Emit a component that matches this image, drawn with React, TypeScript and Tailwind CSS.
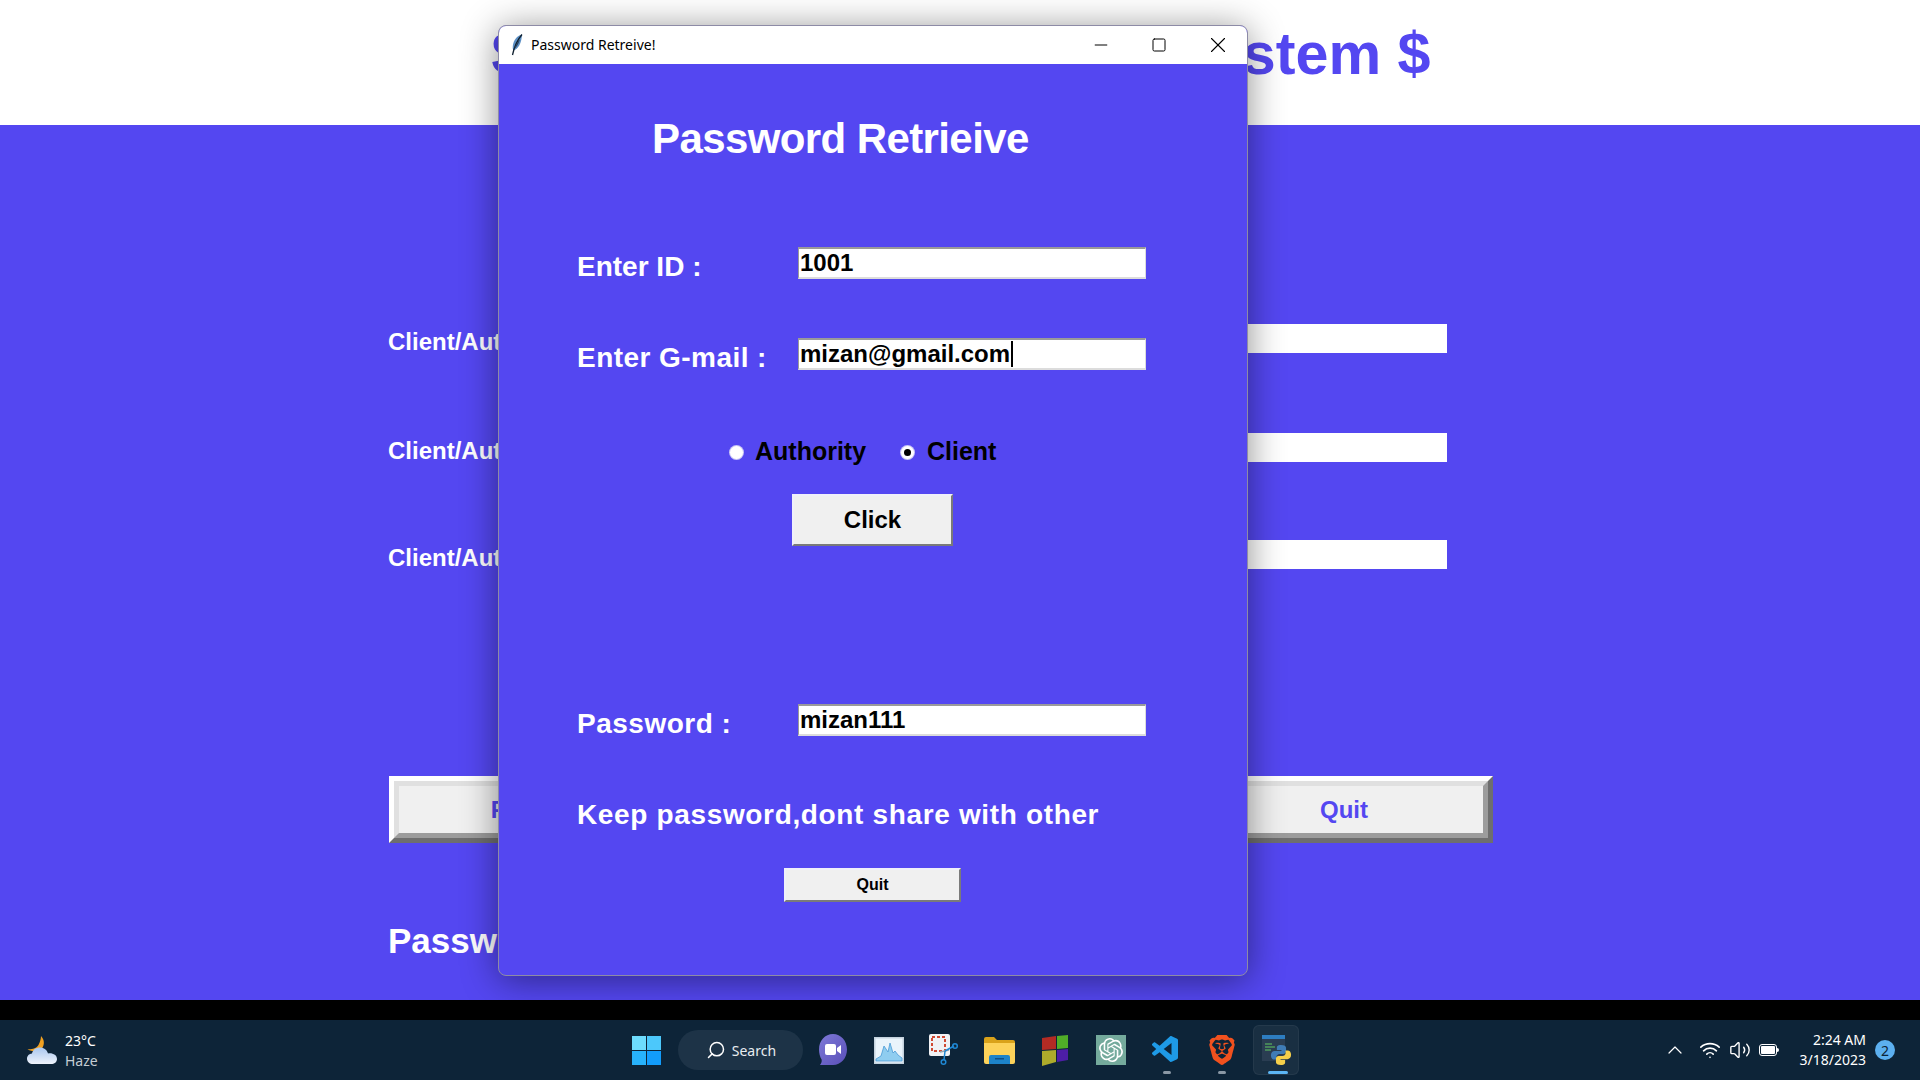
import React from "react";
import { ChevronUp, Wifi, Volume2, Search, Minus, X, Square } from "lucide-react";
import { SiOpenai, SiBrave } from "react-icons/si";
import { VscVscode } from "react-icons/vsc";

const raised =
  "border-2 border-t-[#f0f0fa] border-l-[#f0f0fa] border-r-[#7a7a7a] border-b-[#7a7a7a] bg-[#f0f0f0] flex items-center justify-center text-black font-bold";

function Entry({ text, cursor }: { text: string; cursor?: boolean }) {
  return (
    <div className="w-[348px] h-8 bg-white border-t-2 border-t-[#9a9a9a] border-l border-l-[#9a9a9a] border-r border-r-[#dcdcdc] border-b-2 border-b-[#dcdcdc] flex items-center pl-px text-black font-bold text-2xl">
      <span>{text}</span>
      {cursor && <span className="w-0.5 h-[26px] bg-black ml-px" />}
    </div>
  );
}

function WinRow({ label, text, cursor, track, mt }: { label: string; text: string; cursor?: boolean; track: string; mt: string }) {
  return (
    <div className={`flex items-start h-8 pl-[78px] ${mt}`}>
      <div className={`w-[221px] h-8 pt-[4px] text-white font-bold text-[28px] leading-8 whitespace-nowrap ${track}`}>{label}</div>
      <Entry text={text} cursor={cursor} />
    </div>
  );
}

function BgRow({ mt }: { mt: string }) {
  return (
    <div className={`w-[1059px] h-[29px] flex items-center justify-between ${mt}`}>
      <div className="pt-1.5 text-white font-bold text-2xl leading-7 whitespace-nowrap">Client/Authority ID :</div>
      <div className="w-[647px] h-[29px] bg-white" />
    </div>
  );
}

function BgButton({ label }: { label: string }) {
  return (
    <div className="w-[298px] h-[67px] border-[5px] border-t-white border-l-white border-r-[#6e6e6e] border-b-[#6e6e6e]">
      <div className="w-full h-full border-[5px] border-t-[#e0e0e0] border-l-[#e0e0e0] border-r-[#9c9c9c] border-b-[#9c9c9c] bg-[#f0f0f0] flex items-center justify-center text-2xl font-bold text-[#5447f1]">
        {label}
      </div>
    </div>
  );
}

function Radio({ on }: { on?: boolean }) {
  return (
    <span className="w-[13px] h-[13px] rounded-full bg-white ring-1 ring-[#c9c6f5] flex items-center justify-center shrink-0">
      {on && <span className="w-[7px] h-[7px] rounded-full bg-black" />}
    </span>
  );
}

function Feather() {
  return (
    <svg width="14" height="22" viewBox="0 0 14 22">
      <path d="M12 0.5C7 1.500 3.500 6 2.800 12c-.2 2 0 3.500.7 4.500C8 15 11.500 10 12 .5z" fill="#5b8fc4" />
      <path d="M12 0.500C9 4 4.500 11 2.500 21" stroke="#10202f" strokeWidth="1.300" fill="none" />
      <path d="M10 5C7.500 8 5.500 11 4 15c3-2 5-6 6-10z" fill="#24405e" />
    </svg>
  );
}

function Weather() {
  return (
    <svg width="32" height="30" viewBox="0 0 32 30">
      <path d="M15 1c3.500 3.500 4 9 .5 13-3 2.800-9 3-14 .2 4 .3 9-.5 11-4.200C14 7 15 4 15 1z" fill="#f0a020" />
      <defs>
        <linearGradient id="cl" x1="0" y1="0" x2="0" y2="1">
          <stop offset="0" stopColor="#a9c6ee" />
          <stop offset="1" stopColor="#eef3fb" />
        </linearGradient>
      </defs>
      <path d="M7 29c-3.500 0-6-2.300-6-5.300 0-2.800 2.200-5 5-5.200C7 14.500 10 12.500 14 12.500c4 0 7 2.500 8 6 4.500-.8 9 1.500 9 5.500 0 3-2.500 5-6 5z" fill="url(#cl)" />
    </svg>
  );
}

function WinLogo() {
  const c = "w-[14px] h-[14px]";
  return (
    <div className="grid grid-cols-2 gap-px w-[29px]">
      <div className={`${c} bg-[#6ddcfd]`} />
      <div className={`${c} bg-[#4cc8fb]`} />
      <div className={`${c} bg-[#27b2fb]`} />
      <div className={`${c} bg-[#129cfb]`} />
    </div>
  );
}

function Meet() {
  return (
    <svg width="30" height="34" viewBox="0 0 30 34">
      <defs>
        <linearGradient id="mt" x1="0" y1="0" x2="1" y2="1">
          <stop offset="0" stopColor="#7d79d8" />
          <stop offset="1" stopColor="#5a4fb8" />
        </linearGradient>
      </defs>
      <path d="M15 1c8 0 14 7 14 15.500S23 32 15 32H2c1.500-2 2-3.500 1.600-5.500C2 24 1 20 1 16.500 1 7.500 7 1 15 1z" fill="url(#mt)" />
      <rect x="7" y="11" width="11" height="11" rx="2" fill="#fff" />
      <path d="M19 15l4-3v9l-4-3z" fill="#fff" />
    </svg>
  );
}

function TaskMgr() {
  return (
    <svg width="30" height="27" viewBox="0 0 30 27">
      <rect width="30" height="27" fill="#c5d3de" />
      <rect x="1.500" y="1.500" width="27" height="24" fill="#eaf4fb" />
      <path d="M2 22l5-3 3-10 2 3 2 3 2-9 3 10 2-2 3 4 4 3v3H2z" fill="#8fcdf0" stroke="#4a9ad6" strokeWidth=".8" />
    </svg>
  );
}

function Snip() {
  return (
    <svg width="30" height="32" viewBox="0 0 30 32">
      <rect x="0" y="0" width="21" height="22" rx="2" fill="#f0f2f5" />
      <rect x="3" y="3" width="13" height="14" fill="none" stroke="#d04a33" strokeWidth="2" strokeDasharray="3 2" />
      <path d="M11 18l9-2" stroke="#9aa4ad" strokeWidth="1.500" />
      <path d="M16 17l9-5M16 17l-1 9" stroke="#1f88d4" strokeWidth="1.500" />
      <circle cx="26" cy="12" r="2.300" fill="none" stroke="#1f88d4" strokeWidth="1.500" />
      <circle cx="14.500" cy="28" r="2.300" fill="none" stroke="#1f88d4" strokeWidth="1.500" />
    </svg>
  );
}

function Folder() {
  return (
    <svg width="31" height="27" viewBox="0 0 31 27">
      <path d="M0 2a2 2 0 0 1 2-2h8l3 3h16a2 2 0 0 1 2 2v3H0z" fill="#d9a21a" />
      <path d="M0 6h31v19a2 2 0 0 1-2 2H2a2 2 0 0 1-2-2z" fill="#fcd25a" />
      <path d="M5 27v-7a2 2 0 0 1 2-2h17a2 2 0 0 1 2 2v7z" fill="#1d83c9" />
      <rect x="11" y="21" width="9" height="1.500" fill="#0e4f87" />
    </svg>
  );
}

function Blocks() {
  return (
    <svg width="28" height="31" viewBox="0 0 28 31">
      <path d="M1 3l14-2v13l-14 1z" fill="#b22b24" />
      <path d="M16 1l11-1v13l-11 1z" fill="#50ad28" />
      <path d="M1 16l14-1v12L1 31z" fill="#adab2b" />
      <path d="M16 15l11-1v11l-11 2z" fill="#4d1ea6" />
    </svg>
  );
}

function Python() {
  return (
    <div className="relative w-[30px] h-[30px]">
      <svg width="30" height="30" viewBox="0 0 30 30">
        <rect width="23" height="26" fill="#2a3d52" />
        <rect width="23" height="4" fill="#2d7dc0" />
        <path d="M3 9h7M3 12h10M3 15h6" stroke="#4f9a5c" strokeWidth="1.300" />
      </svg>
      <svg className="absolute left-[8px] top-[9px]" width="22" height="22" viewBox="0 0 24 24">
        <path d="M12 1C8 1 7.500 2.700 7.500 4v2.500H12.500v1H5C3 7.500 1 9 1 12.200S2.800 17 4.500 17H7v-2.800c0-1.800 1.600-3.300 3.400-3.300h4.200c1.500 0 2.900-1.300 2.900-2.800V4c0-1.600-1.600-3-5.500-3z" fill="#3f7cb6" />
        <path d="M12 23c4 0 4.500-1.700 4.500-3v-2.500H11.500v-1H19c2 0 4-1.500 4-4.700S21.200 7 19.500 7H17v2.800c0 1.800-1.600 3.300-3.400 3.300H9.400c-1.500 0-2.900 1.300-2.900 2.800V20c0 1.600 1.600 3 5.500 3z" fill="#f5cf4a" />
      </svg>
    </div>
  );
}

function Slot({ children, dot, active }: { children: React.ReactNode; dot?: boolean; active?: boolean }) {
  return (
    <div className="relative w-[55.500px] h-[50px] flex items-center justify-center shrink-0">
      {active && <div className="absolute left-[3px] top-0 w-[46px] h-[50px] rounded-md bg-white/5 border border-white/5" />}
      <div className="relative">{children}</div>
      {dot && <div className="absolute bottom-[1px] left-[24px] w-2 h-[3px] rounded-full bg-[#8a98a5]" />}
      {active && <div className="absolute bottom-[1px] left-[18px] w-5 h-[3px] rounded-full bg-[#5cb6f5]" />}
    </div>
  );
}

export default function App() {
  return (
    <div className="relative w-[1920px] h-[1080px] overflow-hidden flex flex-col font-['Liberation_Sans',Arial,sans-serif] bg-black">
      <header className="h-[125px] bg-white flex items-center justify-center pb-4 pl-[2px] text-[59.300px] font-bold text-[#5447f1] whitespace-nowrap shrink-0">
        $ Banking Management System $
      </header>

      <main className="h-[875px] bg-[#5447f1] pl-[388px] pt-[199px] shrink-0">
        <BgRow mt="" />
        <BgRow mt="mt-20" />
        <BgRow mt="mt-[78px]" />
        <div className="w-[1104px] ml-px mt-[207px] flex justify-between">
          <BgButton label="Proceed" />
          <BgButton label="Quit" />
        </div>
        <div className="mt-[78px] text-white font-bold text-[35px] leading-10">Password :</div>
      </main>

      <div className="h-5 bg-black shrink-0" />

      <footer className="h-[60px] bg-[#0d2438] flex items-center text-white relative shrink-0">
        <div className="ml-[26px] mt-[-1px]"><Weather /></div>
        <div className="ml-[7px] mt-0.5 font-['Noto_Sans',sans-serif] text-[14px] leading-5">
          <div>23°C</div>
          <div className="text-[#c4ccd3]">Haze</div>
        </div>
        <div className="ml-[534px]"><WinLogo /></div>
        <div className="ml-[17px] w-[125px] h-10 rounded-full bg-[#1d3347] flex items-center pl-[28px] gap-[6px] font-['Noto_Sans',sans-serif] text-[14px] text-[#e8edf0]">
          <Search size={20} strokeWidth={1.800} className="-scale-x-100 text-white" />
          <span>Search</span>
        </div>
        <div className="flex ml-[3px]">
          <Slot><Meet /></Slot>
          <Slot><TaskMgr /></Slot>
          <Slot><Snip /></Slot>
          <Slot><Folder /></Slot>
          <Slot><Blocks /></Slot>
          <Slot>
            <div className="w-[30px] h-[30px] bg-[#74aa9c] flex items-center justify-center text-white"><SiOpenai size={24} /></div>
          </Slot>
          <Slot dot><VscVscode size={32} className="text-[#1e9ae6]" /></Slot>
          <Slot dot><SiBrave size={30} className="text-[#f1511e]" /></Slot>
          <Slot active><Python /></Slot>
        </div>
        <div className="ml-auto flex items-center text-white">
          <ChevronUp size={24} strokeWidth={1.200} />
          <Wifi size={22} strokeWidth={1.800} className="ml-[12px]" />
          <Volume2 size={22} strokeWidth={1.500} className="ml-[8px]" />
          <div className="ml-[8px] w-[18px] h-[12px] rounded-[3px] border border-white p-px flex">
            <div className="flex-1 bg-white rounded-[1px]" />
          </div>
          <div className="w-0.5 h-1 bg-white rounded-r-sm" />
          <div className="ml-0 w-[87px] text-right font-['Noto_Sans',sans-serif] text-[14px] leading-5 whitespace-nowrap">
            <div>2:24 AM</div>
            <div>3/18/2023</div>
          </div>
          <div className="ml-[9px] mr-[25px] w-5 h-5 rounded-full bg-[#5cb0f0] text-[#0d2438] text-[14px] flex items-center justify-center font-['Noto_Sans',sans-serif]">2</div>
        </div>
      </footer>

      <section className="absolute left-[498px] top-[25px] w-[750px] h-[951px] rounded-lg overflow-hidden bg-[#5447f1] border border-[#8d8ba6] shadow-[0_4px_36px_rgba(0,0,0,0.45)] flex flex-col">
        <div className="h-[39px] -mt-px -mx-px bg-white flex items-center shrink-0 text-black">
          <div className="ml-[12px]"><Feather /></div>
          <div className="ml-[7px] font-['Noto_Sans',sans-serif] text-[14px] whitespace-nowrap">Password Retreive!</div>
          <Minus size={20} strokeWidth={1.200} className="ml-auto" />
          <Square size={16} strokeWidth={1.500} className="ml-[40px]" />
          <X size={26} strokeWidth={1} className="ml-[38px] mr-[17px]" />
        </div>
        <h1 className="mt-[51px] ml-[153px] text-[42px] leading-[48px] tracking-[-0.6px] font-bold text-white whitespace-nowrap">Password Retrieive</h1>
        <WinRow mt="mt-[84px]" label="Enter ID :" text="1001" track="" />
        <WinRow mt="mt-[59px]" label="Enter G-mail :" text="mizan@gmail.com" cursor track="tracking-[0.45px]" />
        <div className="mt-[67px] h-[30px] ml-[231px] flex items-center text-[25px] font-bold text-black">
          <Radio />
          <span className="ml-[12px] w-[146px]">Authority</span>
          <Radio on />
          <span className="ml-[13px]">Client</span>
        </div>
        <div className={`mt-[27px] ml-[293px] w-[161px] h-[52px] text-2xl ${raised}`}>Click</div>
        <WinRow mt="mt-[158px]" label="Password :" text="mizan111" track="tracking-[0.5px]" />
        <div className="mt-[62px] ml-[78px] h-[34px] leading-[34px] text-white font-bold text-[28px] tracking-[0.65px] whitespace-nowrap">Keep password,dont share with other</div>
        <div className={`mt-[36px] ml-[285px] w-[177px] h-[34px] text-base ${raised}`}>Quit</div>
      </section>
    </div>
  );
}
